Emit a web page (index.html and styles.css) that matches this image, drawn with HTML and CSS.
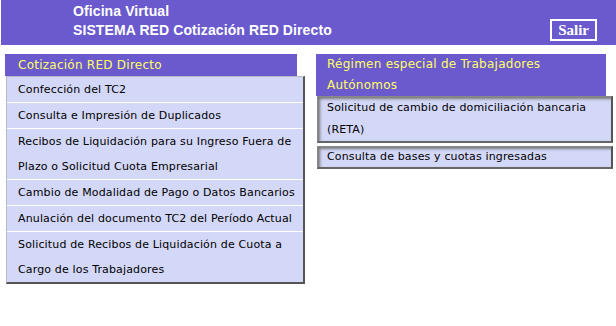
FILE: index.html
```html
<!DOCTYPE html>
<html lang="es">
<head>
  <meta charset="UTF-8">
  <title>Oficina Virtual - SISTEMA RED Cotización RED Directo</title>
  <link rel="stylesheet" href="styles.css">
</head>
<body>

  <div class="top">
    <div class="top-title">
      <div>Oficina Virtual</div>
      <div>SISTEMA RED Cotización RED Directo</div>
    </div>
    <a class="salir" href="#">Salir</a>
  </div>

  <div class="menus">
    <!-- Cotizacion -->
    <div class="col col-left">
      <div class="col-head">Cotización RED Directo</div>
      <div class="list">
        <a class="item" href="#">Confección del TC2</a>
        <a class="item" href="#">Consulta e Impresión de Duplicados</a>
        <a class="item" href="#">Recibos de Liquidación para su Ingreso Fuera de Plazo o Solicitud Cuota Empresarial</a>
        <a class="item" href="#">Cambio de Modalidad de Pago o Datos Bancarios</a>
        <a class="item" href="#">Anulación del documento TC2 del Período Actual</a>
        <a class="item last" href="#">Solicitud de Recibos de Liquidación de Cuota a Cargo de los Trabajadores</a>
      </div>
    </div>

    <!-- RETA -->
    <div class="col col-right">
      <div class="col-head">Régimen especial de Trabajadores Autónomos</div>
      <a class="box" href="#">Solicitud de cambio de domiciliación bancaria (RETA)</a>
      <a class="box" href="#">Consulta de bases y cuotas ingresadas</a>
    </div>
  </div>

</body>
</html>
```

FILE: styles.css
```css
body { margin: 0; background: #fff; font-family: "DejaVu Sans", Verdana, sans-serif; }
a { text-decoration: none; color: #000; }

.top {
  display: flex;
  justify-content: space-between;
  margin-left: 1px;
  height: 45px;
  padding-left: 72px;
  background-color: #6a5acd;
}
.top-title {
  padding-top: 2px;
  color: #fff;
  font-family: "Liberation Sans", Arial, sans-serif;
  font-weight: bold;
  font-size: 14px;
  line-height: 19px;
  letter-spacing: 0.1px;
}
.salir {
  align-self: flex-end;
  margin: 0 19px 4px 0;
  border: 2px solid #fff;
  padding: 0 6px;
  height: 18px;
  color: #fff;
  font-family: "Liberation Serif", serif;
  font-weight: bold;
  font-size: 15px;
  line-height: 18px;
}

.menus { display: flex; align-items: flex-start; margin-top: 9px; }
.col-head {
  background-color: #6a5acd;
  color: #ffff66;
  font-size: 12px;
  letter-spacing: 0.25px;
}
.col-left { margin-left: 5px; width: 300px; }
.col-left .col-head { width: 279px; height: 22px; line-height: 22px; padding-left: 13px; }
.list {
  margin-left: 1px;
  border-top: 1px solid #b8b8c8;
  border-left: 1px solid #b8b8c8;
  border-right: 2px solid #555;
  border-bottom: 2px solid #555;
  background-color: #d4d8f8;
}
.item {
  display: block;
  padding-left: 11px;
  border-bottom: 1px solid #fff;
  font-size: 11px;
  letter-spacing: 0.15px;
  line-height: 25px;
}
.item.last { border-bottom: none; }

.col-right { margin-left: 11px; width: 297px; }
.col-right .col-head { width: 225px; padding: 0 54px 0 11px; line-height: 21px; }
.box {
  display: block;
  margin: 0 0 3px 1px;
  padding: 0 10px 0 9px;
  border: 1px solid #888;
  border-right: 2px solid #555;
  border-bottom: 2px solid #666;
  box-shadow: inset 2px 2px 3px #777;
  background-color: #d4d8f8;
  font-size: 11px;
  letter-spacing: 0.15px;
  line-height: 22px;
}
.box + .box { line-height: 20px; }
```
